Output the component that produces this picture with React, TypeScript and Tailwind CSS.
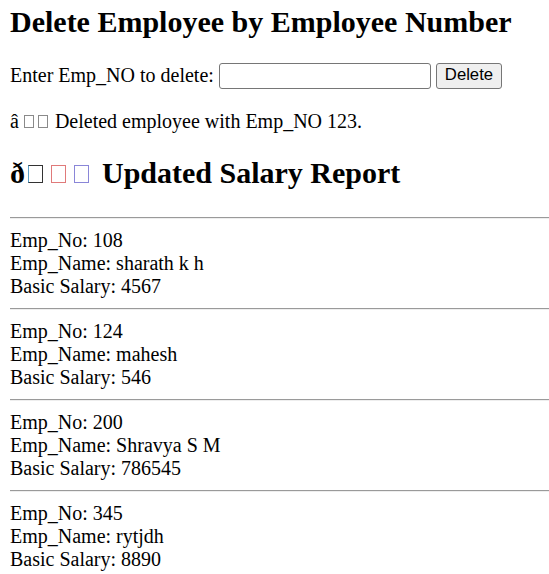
const employees = [
  { no: 108, name: "sharath k h", salary: 4567 },
  { no: 124, name: "mahesh", salary: 546 },
  { no: 200, name: "Shravya S M", salary: 786545 },
  { no: 345, name: "rytjdh", salary: 8890 },
];

const serif = "font-['Liberation_Serif','Times_New_Roman',serif]";

function Rule() {
  return <div className="my-[10px] h-[2px] border-t border-t-[#9a9a9a] border-b border-b-[#eeeeee]" />;
}

export default function App() {
  return (
    <div className={`${serif} min-h-[574px] overflow-hidden bg-white pl-[10px] text-[20px] leading-[23px] text-black`}>
      <h2 className="mt-[5px] text-[30px] font-bold leading-[34.5px]">Delete Employee by Employee Number</h2>

      {/* delete form */}
      <form className="mt-[23px] flex items-center" onSubmit={(e) => e.preventDefault()}>
        <label htmlFor="empno">Enter Emp_NO to delete:</label>
        <input
          id="empno"
          type="text"
          className="ml-[5px] h-[26px] w-[212px] rounded-[3px] border border-[#767676] bg-white px-1 outline-none"
        />
        <button
          type="submit"
          className="ml-[5px] h-[26px] rounded-[3px] border border-[#767676] bg-[#efefef] px-[8px] font-['Liberation_Sans',Arial,sans-serif] text-[16.7px] leading-none"
        >
          Delete
        </button>
      </form>

      <p className="mt-[21px]">
        â
        <span className="ml-[5px] inline-block h-[13px] w-[10px] border border-[#8a8a8a] align-baseline" />
        <span className="ml-[4px] inline-block h-[13px] w-[10px] border border-[#8a8a8a] align-baseline" />
        <span className="ml-[7px]">Deleted employee with Emp_NO 123.</span>
      </p>

      <h2 className="mt-[23px] text-[30px] font-bold leading-[34.5px]">
        ð
        <span className="ml-[3px] inline-block h-[18px] w-[15px] border border-[#333] border-l-[#5aa0c8] align-baseline" />
        <span className="ml-[8px] inline-block h-[18px] w-[15px] border border-[#e07a7a] align-baseline" />
        <span className="ml-[8px] inline-block h-[18px] w-[15px] border border-[#8a86d8] align-baseline" />
        <span className="ml-[13px]">Updated Salary Report</span>
      </h2>

      <div className="mt-[27px]">
        {employees.map((emp) => (
          <div key={emp.no}>
            <Rule />
            <div>Emp_No: {emp.no}</div>
            <div>Emp_Name: {emp.name}</div>
            <div>Basic Salary: {emp.salary}</div>
          </div>
        ))}
        <Rule />
      </div>
    </div>
  );
}
